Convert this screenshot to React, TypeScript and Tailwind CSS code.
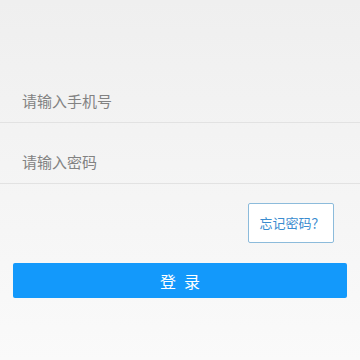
export default function App() {
  return (
    <div
      className="w-[360px] h-[360px] overflow-hidden bg-gradient-to-b from-[#efefef] to-[#fafafa]"
      style={{ fontFamily: '"Noto Sans CJK SC", "Noto Sans", sans-serif' }}
    >
      <div className="pt-[62px]">
        {/* Phone field */}
        <div className="h-[61px] flex items-end border-b border-[#e2e2e2]">
          <input
            className="w-full bg-transparent outline-none pl-[22px] pb-[10px] text-[15px] leading-[22px] text-[#666] placeholder:text-[#828282]"
            placeholder="请输入手机号"
          />
        </div>
        {/* Password field */}
        <div className="h-[61px] flex items-end border-b border-[#e2e2e2]">
          <input
            type="password"
            className="w-full bg-transparent outline-none pl-[22px] pb-[10px] text-[15px] leading-[22px] text-[#666] placeholder:text-[#828282]"
            placeholder="请输入密码"
          />
        </div>

        <div className="flex justify-end pt-[19px] pr-[26px]">
          <button className="w-[86px] h-[40px] bg-white border border-[#8cbbdb] rounded-[2px] text-[13px] text-[#3a8ccf] pl-[2px]">
            忘记密码？
          </button>
        </div>

        <div className="px-[13px] pt-[20px]">
          <button className="w-full h-[35px] bg-[#1399fb] rounded-[2px] text-white text-[16px] tracking-[8px] pl-[8px]">
            登录
          </button>
        </div>
      </div>
    </div>
  )
}
